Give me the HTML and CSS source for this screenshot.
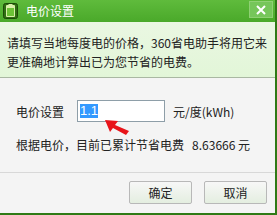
FILE: index.html
```html
<!DOCTYPE html>
<html>
<head>
<meta charset="utf-8">
<link rel="stylesheet" href="styles.css">
</head>
<body>
<div class="win">
  <div class="titlebar">
    <svg class="appicon" width="15" height="16" viewBox="0 0 15 16">
      <rect x="0.5" y="0.5" width="14" height="15" rx="2" fill="#2f6d12" stroke="#1d4a08"/>
      <rect x="3" y="2" width="9" height="12" rx="1" fill="#d8f0a8"/>
      <rect x="4" y="5" width="7" height="8" fill="#6cc236"/>
      <rect x="5.5" y="1" width="4" height="2" fill="#d8f0a8"/>
    </svg>
    <span class="title">电价设置</span>
    <div class="close">
      <svg width="12" height="10" viewBox="0 0 12 10"><path d="M2 1 L10 9 M10 1 L2 9" stroke="#fff" stroke-width="2"/></svg>
    </div>
  </div>
  <div class="info">
    <p>请填写当地每度电的价格，360省电助手将用它来<br>更准确地计算出已为您节省的电费。</p>
  </div>
  <div class="body">
    <div class="row">
      <span class="label">电价设置</span>
      <div class="input"><span class="sel">1.1</span></div>
      <span class="unit">元/度(kWh)</span>
    </div>
    <div class="saved">根据电价，目前已累计节省电费&nbsp;&nbsp;&nbsp;8.63666 元</div>
    <svg class="arrow" width="25" height="16" viewBox="0 0 25 16">
      <path d="M0 0 L13 1 L10 5 L24 11 L21 15 L8 8 L5 12 Z" fill="#e8141a"/>
    </svg>
  </div>
  <div class="footer">
    <button class="btn">确定</button>
    <button class="btn">取消</button>
  </div>
</div>
</body>
</html>
```
FILE: styles.css
```css
html, body { margin: 0; padding: 0; }
body {
  width: 277px; height: 215px; overflow: hidden;
  font-family: "Noto Sans CJK SC", "Liberation Sans", sans-serif;
  font-size: 12px; color: #222;
}
.win {
  width: 277px; height: 215px; box-sizing: border-box;
  border-right: 2px solid #2f7a16; border-bottom: 2px solid #2f7a16;
  display: flex; flex-direction: column; background: #f4f4f4;
}
.titlebar {
  height: 22px; flex: none;
  background: linear-gradient(#5fbb3c, #4aa92a);
  display: flex; align-items: center; padding-left: 3px;
  position: relative;
}
.appicon { display: block; }
.title { color: #fff; font-size: 12px; margin-left: 8px; line-height: 22px; }
.close {
  position: absolute; right: 2px; top: 1px;
  width: 24px; height: 17px;
  background: #76c65a; border: 1px solid #8fd073; box-sizing: border-box;
  display: flex; align-items: center; justify-content: center;
}
.info {
  height: 56px; flex: none;
  background: linear-gradient(#eaf7e2, #e2f6d8);
  border-bottom: 1px solid #a9b8a2;
  padding: 11px 0 0 7px; box-sizing: border-box;
}
.info p { margin: 0; line-height: 19px; color: #222; }
.body { position: relative; flex: 1; padding: 22px 0 0 16px; }
.row { display: flex; align-items: center; height: 22px; }
.label { width: 61px; }
.input {
  width: 88px; height: 22px; box-sizing: border-box;
  background: #fff; border: 1px solid #8e9ea8;
  display: flex; align-items: center; padding-left: 2px;
}
.sel { background: #3399ff; color: #fff; line-height: 14px; font-family: "Liberation Sans", sans-serif; font-size: 13px; }
.unit { margin-left: 8px; }
.saved { margin-top: 13px; line-height: 20px; }
.arrow { position: absolute; left: 105px; top: 42px; }
.footer {
  height: 41px; flex: none;
  border-top: 1px solid #d8d8d8;
  display: flex; justify-content: flex-end; align-items: flex-start;
  padding: 8px 8px 0 0; gap: 12px; box-sizing: border-box;
}
.btn {
  width: 63px; height: 23px; margin: 0;
  font-family: inherit; font-size: 12px; color: #222;
  background: linear-gradient(#f7f7f7, #e4eee0);
  border: 1px solid #b8b8b8; border-radius: 2px;
}
```
